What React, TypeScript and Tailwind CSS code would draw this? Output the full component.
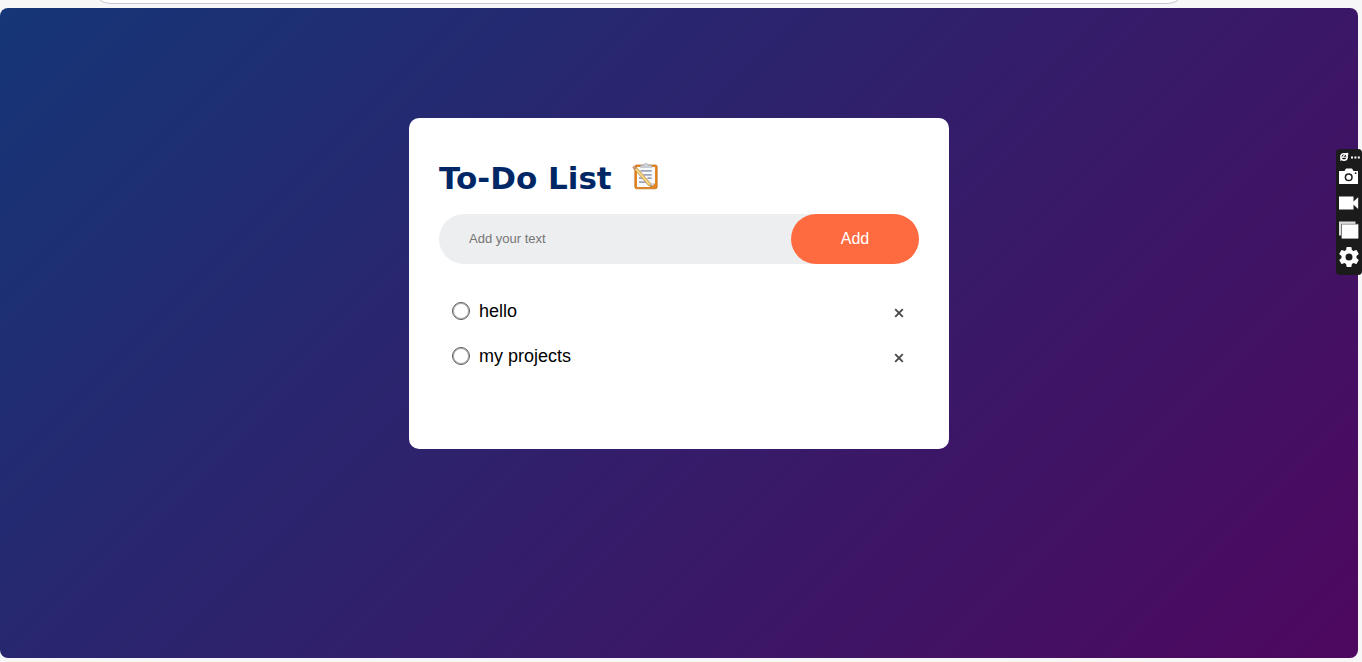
import { useState, type FormEvent } from "react";

type Task = { id: number; text: string; done: boolean };

function ClipboardIcon() {
  return (
    <svg viewBox="0 0 30 30" className="h-[30px] w-[30px]" aria-hidden="true">
      <rect x="2.800" y="2" width="22.400" height="23.800" rx="1.800" fill="#e3861f" stroke="#c06c18" strokeWidth="0.700" />
      <path d="M5 4h18v16.200L19.200 24H5z" fill="#f6f8fc" />
      <path d="M23 20.200L19.200 24v-3.800z" fill="#c8cdd8" />
      <path d="M8.600 4.300V2.200h3.200c.200-1.100.900-1.700 2.200-1.700s2 .600 2.200 1.700h3.600v2.100z" fill="#d0d4dc" stroke="#a0a5b0" strokeWidth="0.600" />
      <path d="M8.500 7.800h11.200M11.500 11.800h8.200M7 15.200h5.500M15.500 15.200h4.200M7 19.200h8" stroke="#9da5ba" strokeWidth="1.700" />
      <path d="M2 5.700l2.300-1.600 14 16 1.300 3.700-3.500-1.600z" fill="#edc66d" stroke="#b58c43" strokeWidth="0.600" />
      <path d="M4 6.200l13 14.900" stroke="#fae7ad" strokeWidth="0.900" />
      <path d="M0.700 4.600c.400-1.100 1.300-1.600 2.200-1.300l1.600 1.600-2.300 1.700z" fill="#d89a7c" stroke="#a87560" strokeWidth="0.500" />
      <path d="M19.600 23.800l-.500-1.500-1 .9z" fill="#4b4038" />
    </svg>
  );
}

function CloseIcon() {
  return (
    <svg viewBox="0 0 10 10" className="h-[10px] w-[10px]" aria-hidden="true">
      <path d="M1.2 1.2l7.6 7.6M8.8 1.2L1.2 8.800" stroke="#4a4a4a" strokeWidth="1.900" fill="none" />
    </svg>
  );
}

function CaptureToolbar() {
  return (
    <aside
      aria-label="Capture tools"
      className="fixed top-[149px] right-0 flex w-[26px] flex-col items-center rounded-sm bg-[#1b1b1b] pt-1 pb-2 text-white"
    >
      <button type="button" aria-label="Menu" className="flex h-2 w-full items-center justify-center gap-[2px]">
        <svg viewBox="0 0 10 10" className="h-[10px] w-[10px]" aria-hidden="true">
          <circle cx="5" cy="5" r="3.2" fill="none" stroke="currentColor" strokeWidth="1.5" />
          <path d="M1.800 8.700c-.600-1.300 4.600-7.600 6.600-7.500 1 .5.200 2-.8 3.200M3 5.200h4.600" fill="none" stroke="currentColor" strokeWidth="1.100" />
        </svg>
        <svg viewBox="0 0 9 3" className="h-[3px] w-[9px]" fill="currentColor" aria-hidden="true">
          <rect x="0" y="0.500" width="2" height="2" />
          <rect x="3.400" y="0.500" width="2" height="2" />
          <rect x="6.800" y="0.500" width="2" height="2" />
        </svg>
      </button>
      <button type="button" aria-label="Take screenshot" className="mt-[7px]">
        <svg viewBox="0 0 20 16" className="h-4 w-5" aria-hidden="true">
          <path d="M0 3h5.500L7 0.500h6L14.500 3H19V16H0z" fill="currentColor" />
          <circle cx="9.700" cy="9.200" r="3.300" fill="none" stroke="#1b1b1b" strokeWidth="1.500" />
          <circle cx="16.600" cy="5.200" r="0.900" fill="#1b1b1b" />
        </svg>
      </button>
      <button type="button" aria-label="Record video" className="mt-3">
        <svg viewBox="0 0 20 14" className="h-[14px] w-5" fill="currentColor" aria-hidden="true">
          <path d="M0 0.500H14.500V5.500L19.200 1.200V13L14.500 8.700V13.500H0z" />
        </svg>
      </button>
      <button type="button" aria-label="Gallery" className="mt-[11px]">
        <svg viewBox="0 0 20 18" className="h-[18px] w-5" aria-hidden="true">
          <path d="M0 0.500H16.500V14.500H0z" fill="#dedede" />
          <path d="M2 2.800H19.500V17.500H2z" fill="#777777" />
          <path d="M3 3.500H19.200V17.500H3z" fill="#ffffff" />
        </svg>
      </button>
      <button type="button" aria-label="Settings" className="mt-2">
        <svg viewBox="2 2 20 20" className="h-5 w-5" fill="currentColor" aria-hidden="true">
          <path d="M19.430 12.980c.040-.320.070-.640.070-.980s-.030-.660-.070-.980l2.110-1.650c.190-.150.240-.420.120-.640l-2-3.460c-.120-.220-.390-.300-.610-.220l-2.490 1c-.520-.400-1.080-.730-1.690-.980l-.380-2.650A.488.488 0 0 0 14 2h-4c-.250 0-.460.180-.490.420l-.380 2.650c-.610.250-1.170.590-1.690.980l-2.490-1c-.230-.090-.490 0-.610.220l-2 3.460c-.130.220-.070.490.120.640l2.110 1.650c-.040.320-.070.650-.070.980s.030.660.070.980l-2.110 1.650c-.190.150-.240.420-.120.640l2 3.460c.120.220.390.300.610.220l2.490-1c.520.400 1.080.730 1.690.980l.380 2.650c.030.240.240.420.490.420h4c.250 0 .460-.180.490-.420l.380-2.650c.610-.250 1.170-.590 1.690-.980l2.490 1c.230.090.490 0 .610-.220l2-3.460c.120-.220.070-.490-.120-.640l-2.110-1.650zM12 15.500a3.500 3.500 0 1 1 0-7 3.500 3.500 0 0 1 0 7z" />
        </svg>
      </button>
    </aside>
  );
}

export default function App() {
  const [tasks, setTasks] = useState<Task[]>([
    { id: 1, text: "hello", done: false },
    { id: 2, text: "my projects", done: false },
  ]);
  const [text, setText] = useState("");

  function addTask(event: FormEvent) {
    event.preventDefault();
    const value = text.trim();
    if (!value) return;
    setTasks([...tasks, { id: Date.now(), text: value, done: false }]);
    setText("");
  }

  function toggle(id: number) {
    setTasks(tasks.map((t) => (t.id === id ? { ...t, done: !t.done } : t)));
  }

  return (
    <div className="flex min-h-screen flex-col bg-[#f7f7f8] pr-1 pb-1 font-['Liberation_Sans',Arial,sans-serif]">
      <div className="flex h-2 items-start overflow-hidden px-[99px]">
        <svg viewBox="0 0 14 4" className="h-1 w-[14px]" aria-hidden="true">
          <path d="M1 0Q5 3.500 14 3.500V0z" fill="white" />
          <path d="M1 0Q5 3.500 14 3.500" fill="none" stroke="#c5c7d3" />
        </svg>
        <div className="h-1 w-full max-w-[1052px] border-b border-[#c5c7d3] bg-white" />
        <svg viewBox="0 0 14 4" className="h-1 w-[14px]" aria-hidden="true">
          <path d="M13 0Q9 3.500 0 3.500V0z" fill="white" />
          <path d="M13 0Q9 3.500 0 3.500" fill="none" stroke="#c5c7d3" />
        </svg>
      </div>

      <main className="flex-1 rounded-lg bg-linear-[135deg,#153677,#4e085f] px-4 pt-[110px] pb-10">
        <section className="mx-auto max-w-[540px] rounded-[10px] bg-white px-[30px] pt-[42px] pb-[71px]">
          <h1 className="mb-[18px] flex items-center gap-5 font-['DejaVu_Sans',Verdana,sans-serif] text-[31px] leading-9 font-bold text-[#002765]">
            To-Do List
            <ClipboardIcon />
          </h1>

          <form onSubmit={addTask} className="mb-6 flex rounded-full bg-[#edeef0]">
            <input
              type="text"
              aria-label="New task"
              placeholder="Add your text"
              value={text}
              onChange={(e) => setText(e.target.value)}
              className="min-w-0 flex-1 bg-transparent pl-[30px] text-[13px] outline-none placeholder:text-[#757575]"
            />
            <button type="submit" className="h-[50px] w-32 rounded-full bg-[#ff6b40] text-base text-white">
              Add
            </button>
          </form>

          <ul>
            {tasks.map((task) => (
              <li key={task.id} className="flex h-[45px] items-center pr-[15px] pl-[13px]">
                <label className="flex flex-1 cursor-pointer items-center gap-[9px] text-lg text-black">
                  <input
                    type="checkbox"
                    checked={task.done}
                    onChange={() => toggle(task.id)}
                    className="h-[18px] w-[18px] appearance-none rounded-full border border-[#5c5c5c] inset-ring inset-ring-[#5c5c5c]/50 checked:bg-[#ff6b40]"
                  />
                  <span className={task.done ? "text-[#555555] line-through" : ""}>{task.text}</span>
                </label>
                <button
                  type="button"
                  aria-label={`Delete ${task.text}`}
                  onClick={() => setTasks(tasks.filter((t) => t.id !== task.id))}
                  className="pt-1"
                >
                  <CloseIcon />
                </button>
              </li>
            ))}
          </ul>
        </section>
      </main>

      <CaptureToolbar />
    </div>
  );
}
